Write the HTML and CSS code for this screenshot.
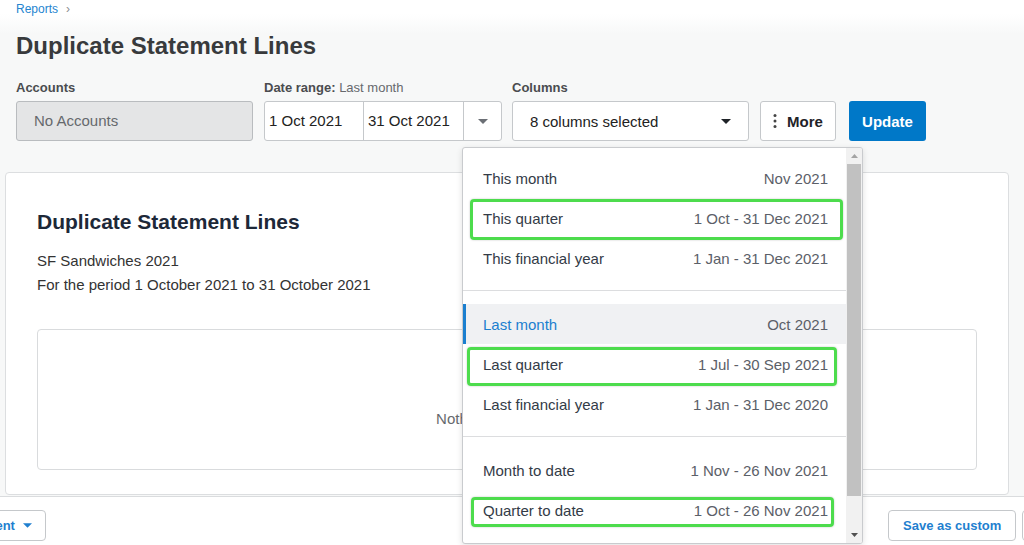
FILE: index.html
```html
<!DOCTYPE html>
<html lang="en">
<head>
    <meta charset="UTF-8">
    <meta name="viewport" content="width=device-width, initial-scale=1.0">
    <title>Duplicate Statement Lines</title>
    <link rel="stylesheet" href="styles.css">
</head>
<body>
    <div class="page">
        <div class="topbar">
            <nav class="crumbs">
                <a href="#">Reports</a>
                <span class="crumb-sep">›</span>
            </nav>
            <h1 class="page-title">Duplicate Statement Lines</h1>

            <div class="controls">
                <div class="field field-accounts">
                    <label class="field-label">Accounts</label>
                    <div class="input-disabled">No Accounts</div>
                </div>

                <div class="field field-dates">
                    <label class="field-label">Date range: <span class="label-note">Last month</span></label>
                    <div class="date-range">
                        <div class="date-part">1 Oct 2021</div>
                        <div class="date-part date-part-end">31 Oct 2021</div>
                        <button class="date-toggle">
                            <svg width="10" height="5" viewBox="0 0 10 5"><polygon points="0,0 10,0 5,5" fill="#6b6f75"/></svg>
                        </button>

                        <div class="range-menu">
                            <div class="range-list">
                                <div class="range-group">
                                    <div class="range-item"><span>This month</span><span class="range-date">Nov 2021</span></div>
                                    <div class="range-item marked mark-a"><span>This quarter</span><span class="range-date">1 Oct - 31 Dec 2021</span></div>
                                    <div class="range-item"><span>This financial year</span><span class="range-date">1 Jan - 31 Dec 2021</span></div>
                                </div>
                                <div class="range-group">
                                    <div class="range-item is-active"><span>Last month</span><span class="range-date">Oct 2021</span></div>
                                    <div class="range-item marked mark-b"><span>Last quarter</span><span class="range-date">1 Jul - 30 Sep 2021</span></div>
                                    <div class="range-item"><span>Last financial year</span><span class="range-date">1 Jan - 31 Dec 2020</span></div>
                                </div>
                                <div class="range-group">
                                    <div class="range-item"><span>Month to date</span><span class="range-date">1 Nov - 26 Nov 2021</span></div>
                                    <div class="range-item marked mark-c"><span>Quarter to date</span><span class="range-date">1 Oct - 26 Nov 2021</span></div>
                                </div>
                            </div>
                            <div class="menu-scroll">
                                <div class="scroll-btn">
                                    <svg width="7" height="4" viewBox="0 0 7 4"><polygon points="0,4 7,4 3.5,0" fill="#a3a3a3"/></svg>
                                </div>
                                <div class="scroll-thumb"></div>
                                <div class="scroll-track"></div>
                                <div class="scroll-btn">
                                    <svg width="7" height="4" viewBox="0 0 7 4"><polygon points="0,0 7,0 3.5,4" fill="#505050"/></svg>
                                </div>
                            </div>
                        </div>
                    </div>
                </div>

                <div class="field field-columns">
                    <label class="field-label">Columns</label>
                    <button class="select">
                        8 columns selected
                        <svg width="10" height="5" viewBox="0 0 10 5"><polygon points="0,0 10,0 5,5" fill="#1f2328"/></svg>
                    </button>
                </div>

                <button class="btn-more">
                    <svg width="4" height="16" viewBox="0 0 4 16">
                        <circle cx="2" cy="2.5" r="1.5" fill="#444"/>
                        <circle cx="2" cy="8" r="1.5" fill="#444"/>
                        <circle cx="2" cy="13.5" r="1.5" fill="#444"/>
                    </svg>
                    More
                </button>
                <button class="btn-primary">Update</button>
            </div>
        </div>

        <main class="report-card">
            <h2 class="report-title">Duplicate Statement Lines</h2>
            <div class="report-meta">
                <p>SF Sandwiches 2021</p>
                <p>For the period 1 October 2021 to 31 October 2021</p>
            </div>
            <div class="report-empty">Nothing to show here</div>
        </main>
    </div>

    <footer class="action-bar">
        <div class="bar-left">
            <button class="btn-outline btn-insert">
                Insert content
                <svg width="9" height="5" viewBox="0 0 10 5"><polygon points="0,0 10,0 5,5" fill="#1f7fcf"/></svg>
            </button>
        </div>
        <div class="bar-right">
            <button class="btn-outline">Save as custom</button>
            <button class="btn-outline">Save</button>
            <button class="btn-outline">Export</button>
        </div>
    </footer>
</body>
</html>
```

FILE: styles.css
```css
* {
    margin: 0;
    padding: 0;
    box-sizing: border-box;
    font-family: "Liberation Sans", Arial, sans-serif;
}

body {
    width: 1024px;
    height: 545px;
    overflow: hidden;
    background-color: #f7f8f8;
    color: #333;
}

.topbar {
    padding: 0 16px;
    background: linear-gradient(#ffffff 0, #ffffff 14px, #f7f8f8 34px);
}

/* breadcrumb + title */
.crumbs {
    display: flex;
    align-items: center;
    gap: 8px;
    font-size: 12px;
    line-height: 18px;
}

.crumbs a {
    color: #2585d0;
    text-decoration: none;
}

.crumb-sep {
    color: #8a8d91;
    font-size: 12px;
}

.page-title {
    margin-top: 12px;
    font-size: 24px;
    line-height: 32px;
    font-weight: bold;
    color: #383a3c;
}

/* filter controls */
.controls {
    display: flex;
    align-items: flex-end;
    margin-top: 18px;
}

.field-label {
    display: block;
    font-size: 13px;
    line-height: 16px;
    font-weight: bold;
    color: #4a4c4f;
    margin-bottom: 5px;
}

.label-note {
    font-weight: normal;
    color: #66696d;
}

.field-accounts {
    width: 237px;
    margin-right: 11px;
}

.input-disabled {
    height: 40px;
    display: flex;
    align-items: center;
    padding: 0 17px 1px;
    background-color: #e4e5e6;
    border: 1px solid #b9bcbf;
    border-radius: 3px;
    font-size: 15px;
    color: #66696d;
}

.field-dates {
    width: 238px;
    margin-right: 10px;
}

.date-range {
    position: relative;
    display: flex;
    height: 40px;
    background-color: #fff;
    border: 1px solid #c5c8cb;
    border-radius: 3px;
}

.date-part {
    width: 99px;
    padding-left: 4px;
    border-right: 1px solid #c5c8cb;
    font-size: 15px;
    line-height: 37px;
    color: #222;
}

.date-part-end {
    width: 100px;
}

.date-toggle {
    flex: 1;
    display: flex;
    align-items: center;
    justify-content: center;
    border: none;
    background: none;
}

.field-columns {
    width: 237px;
    margin-right: 11px;
}

.select {
    width: 100%;
    height: 40px;
    display: flex;
    align-items: center;
    justify-content: space-between;
    padding: 0 17px;
    background-color: #fff;
    border: 1px solid #c5c8cb;
    border-radius: 3px;
    font-size: 15px;
    color: #222;
}

.btn-more {
    width: 76px;
    height: 40px;
    display: flex;
    align-items: center;
    gap: 10px;
    padding-left: 12px;
    margin-right: 13px;
    background-color: #fff;
    border: 1px solid #c5c8cb;
    border-radius: 3px;
    font-size: 15px;
    font-weight: bold;
    color: #1f2328;
}

.btn-primary {
    width: 77px;
    height: 40px;
    background-color: #0078c8;
    border: none;
    border-radius: 3px;
    font-size: 15px;
    font-weight: bold;
    color: #fff;
}

/* date range dropdown */
.range-menu {
    position: absolute;
    top: 45px;
    left: 197px;
    z-index: 10;
    width: 401px;
    height: 397px;
    display: flex;
    overflow: hidden;
    background-color: #fff;
    border: 1px solid #c9cbce;
    border-radius: 3px;
    box-shadow: 0 2px 6px rgba(0, 0, 0, 0.12);
}

.range-list {
    flex: 1;
}

.range-group {
    padding: 13px 0 12px;
    border-top: 1px solid #dcdddf;
}

.range-group:first-child {
    padding-top: 10px;
    border-top: none;
}

.range-item {
    position: relative;
    height: 40px;
    display: flex;
    align-items: center;
    justify-content: space-between;
    padding: 0 18px 0 20px;
    font-size: 15px;
    color: #333b47;
}

.range-date {
    color: #5b6068;
}

.range-item.is-active {
    background-color: #f0f1f3;
    color: #1b7fcf;
    box-shadow: inset 3px 0 #1b7fcf;
}

.range-item.is-active .range-date {
    color: #5b6068;
}

/* green review marks */
.range-item.marked::after {
    content: "";
    position: absolute;
    border: 3px solid #4ddc4d;
    border-radius: 4px;
    box-shadow: 0 0 2px rgba(0, 0, 0, 0.25);
}

.mark-a::after {
    top: 1px;
    bottom: -2px;
    left: 7px;
    right: 3px;
}

.mark-b::after {
    top: 3px;
    bottom: -2px;
    left: 4px;
    right: 9px;
}

.mark-c::after {
    top: 7px;
    bottom: 3px;
    left: 8px;
    right: 12px;
}

.menu-scroll {
    width: 16px;
    display: flex;
    flex-direction: column;
    background-color: #f1f1f1;
}

.scroll-btn {
    height: 16px;
    display: flex;
    align-items: center;
    justify-content: center;
}

.scroll-thumb {
    height: 332px;
    margin: 0 1px;
    background-color: #c1c1c1;
}

.scroll-track {
    flex: 1;
}

/* report body */
.report-card {
    margin: 31px 15px 0 5px;
    padding: 36px 31px 24px;
    background-color: #fff;
    border: 1px solid #dcdee0;
    border-radius: 4px;
}

.report-title {
    font-size: 21px;
    line-height: 26px;
    font-weight: bold;
    color: #1d2838;
}

.report-meta {
    margin-top: 14px;
    font-size: 15px;
    line-height: 24px;
    color: #333;
}

.report-empty {
    height: 141px;
    margin-top: 32px;
    padding-top: 77px;
    border: 1px solid #d9dbdd;
    border-radius: 4px;
    text-align: center;
    font-size: 15px;
    line-height: 24px;
    color: #66696d;
}

/* bottom action bar */
.action-bar {
    display: flex;
    margin-top: 1px;
    padding-top: 13px;
    height: 50px;
    background-color: #fff;
    border-top: 1px solid #dadcde;
}

.bar-left {
    flex: 1;
    display: flex;
}

.bar-right {
    flex: 0 0 136px;
    display: flex;
    gap: 6px;
    overflow: hidden;
}

.btn-outline {
    flex-shrink: 0;
    height: 31px;
    display: flex;
    align-items: center;
    gap: 8px;
    padding: 0 14px;
    background-color: #fff;
    border: 1px solid #c5c8cb;
    border-radius: 4px;
    font-size: 13px;
    font-weight: bold;
    color: #1f7fcf;
    white-space: nowrap;
}

.btn-insert {
    margin-left: -86px;
    padding: 0 13px 0 14px;
}
```
